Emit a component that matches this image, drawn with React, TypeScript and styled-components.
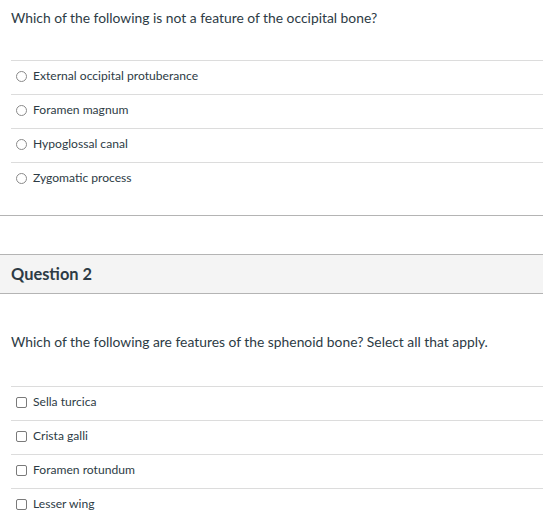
import React from "react";
import styled, { createGlobalStyle } from "styled-components";

const GlobalStyle = createGlobalStyle`
  html, body { margin: 0; padding: 0; background: #ffffff; }
  body { font-family: Lato, "Open Sans", "Liberation Sans", sans-serif; color: #2d3b45; }
`;

const Page = styled.div`
  width: 543px;
  display: flex;
  flex-direction: column;
`;

const QuestionBody = styled.div<{ $top: number }>`
  padding: ${(p) => p.$top}px 0 0 11px;
`;

const QuestionText = styled.p<{ $gap: number }>`
  margin: 0 0 ${(p) => p.$gap}px 0;
  font-size: 13.85px;
  line-height: 20px;
  color: #2d3b45;
`;

const AnswerList = styled.div`
  display: flex;
  flex-direction: column;
`;

const AnswerRow = styled.label`
  display: flex;
  align-items: center;
  gap: 6px;
  height: 28px;
  padding-bottom: 5px;
  border-top: 1px solid #dcdcdc;
  padding-left: 5px;
  font-size: 12.1px;
  color: #2d3b45;
`;

const Radio = styled.span`
  width: 9px;
  height: 9px;
  border: 1px solid #8a8a8a;
  border-radius: 50%;
  flex-shrink: 0;
  margin-top: 2px;
`;

const Check = styled.span`
  width: 9px;
  height: 9px;
  border: 1px solid #7a7a7a;
  border-radius: 2px;
  flex-shrink: 0;
  margin-top: 3px;
`;

const Separator = styled.div`
  margin-top: 19px;
  border-top: 1px solid #b4b4b4;
`;

const QuestionHeader = styled.div`
  margin-top: 38px;
  height: 38px;
  border-top: 1px solid #b4b4b4;
  border-bottom: 1px solid #b4b4b4;
  background: #f4f4f4;
  display: flex;
  align-items: center;
  padding-left: 11px;
`;

const HeaderTitle = styled.h2`
  margin: 0 0 1px 0;
  font-size: 16.4px;
  font-weight: 700;
  color: #2d3b45;
`;

type Q = { text: string; type: "radio" | "check"; answers: string[]; gap: number; top: number };

const q1: Q = {
  text: "Which of the following is not a feature of the occipital bone?",
  type: "radio",
  answers: ["External occipital protuberance", "Foramen magnum", "Hypoglossal canal", "Zygomatic process"],
  gap: 32,
  top: 8,
};

const q2: Q = {
  text: "Which of the following are features of the sphenoid bone? Select all that apply.",
  type: "check",
  answers: ["Sella turcica", "Crista galli", "Foramen rotundum", "Lesser wing"],
  gap: 34,
  top: 38,
};

const Question: React.FC<{ q: Q }> = ({ q }) => (
  <QuestionBody $top={q.top}>
    <QuestionText $gap={q.gap}>{q.text}</QuestionText>
    <AnswerList>
      {q.answers.map((a) => (
        <AnswerRow key={a}>
          {q.type === "radio" ? <Radio /> : <Check />}
          <span>{a}</span>
        </AnswerRow>
      ))}
    </AnswerList>
  </QuestionBody>
);

export default function App() {
  return (
    <>
      <GlobalStyle />
      <Page>
        <Question q={q1} />
        <Separator />
        <QuestionHeader>
          <HeaderTitle>Question 2</HeaderTitle>
        </QuestionHeader>
        <Question q={q2} />
      </Page>
    </>
  );
}
